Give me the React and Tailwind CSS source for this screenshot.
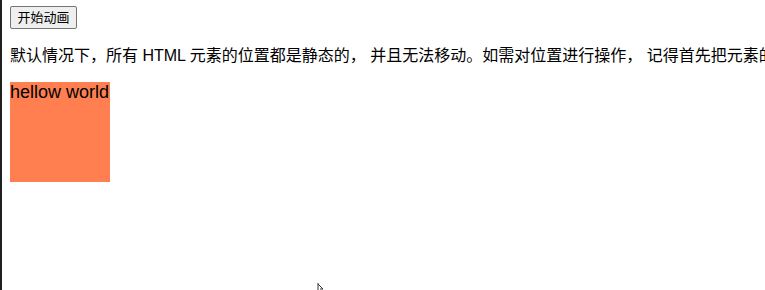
import React from "react";

const App = () => {
  return (
    <div className="relative h-[290px] w-[765px] overflow-hidden border-l-2 border-[#202020] bg-white pl-2 pt-[6px] font-['Liberation_Sans','Noto_Sans_CJK_SC',sans-serif] text-black">
      <button className="flex h-[23px] w-[67px] items-center justify-center rounded-[2px] border border-[#767676] bg-[#efefef] text-[13px] leading-none">
        开始动画
      </button>
      <p className="mt-4 whitespace-nowrap text-[16px] leading-[21px]">
        默认情况下，所有 HTML 元素的位置都是静态的， 并且无法移动。如需对位置进行操作， 记得首先把元素的 position 属性设置为 relative、fixed 或 absolute。
      </p>
      <div className="mt-4 h-[100px] w-[100px] whitespace-nowrap bg-[#ff7f50] text-[18px] leading-[21px]">
        hellow world
      </div>
      {/* mouse pointer */}
      <svg className="absolute left-[315px] top-[283px]" width="10" height="8" viewBox="0 0 10 8">
        <path d="M1 0 V7 M1 1 L6 6 H3" stroke="#333" strokeWidth="1" fill="none" />
      </svg>
    </div>
  );
};

export default App;
